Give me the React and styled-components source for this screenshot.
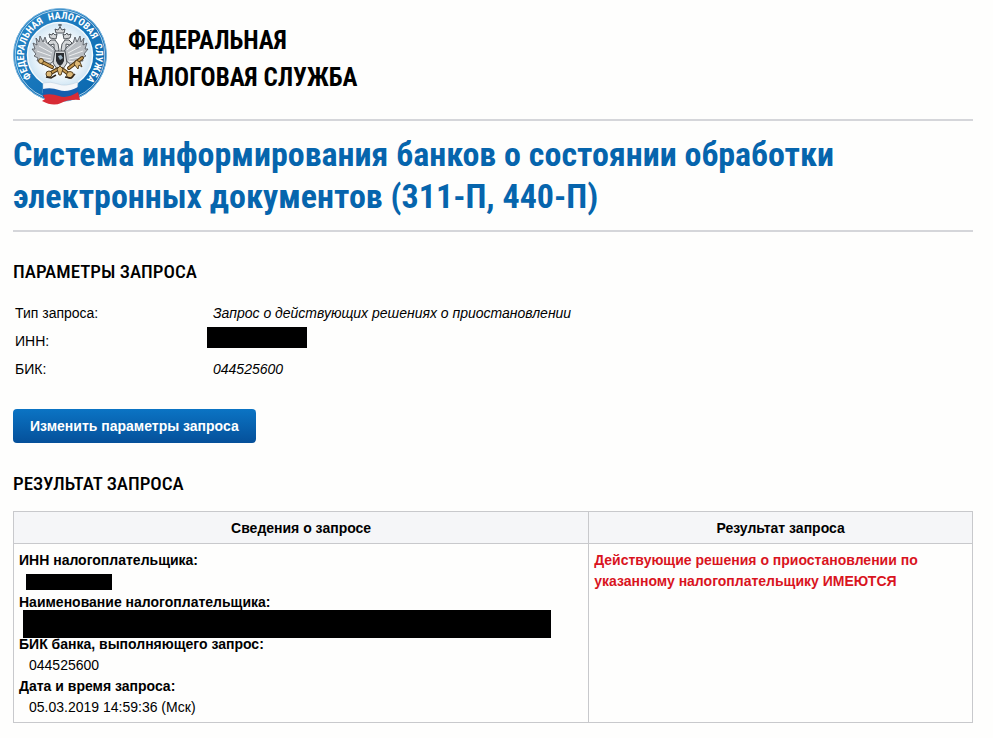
import React from "react";
import styled, { createGlobalStyle } from "styled-components";

const GlobalStyle = createGlobalStyle`
  body {
    margin: 0;
    background-color: #fefefd;
    color: #000;
    font-family: "Liberation Sans", Arial, sans-serif;
    font-size: 14px;
    line-height: 21px;
  }
`;

const Page = styled.div`
  padding: 7px 20px 16px 13px;
`;

const Header = styled.header`
  display: flex;
  align-items: flex-start;
  gap: 20px;
  height: 112px;
  border-bottom: 2px solid #d5d6da;
`;

const Brand = styled.div`
  padding-top: 15px;
  font-family: "Roboto Condensed", Roboto, sans-serif;
  font-size: 25px;
  font-weight: 700;
  line-height: 37px;
  text-transform: uppercase;
`;

const TitleBar = styled.div`
  padding: 12px 0 13px;
  border-bottom: 2px solid #d5d6da;
`;

const Title = styled.h1`
  margin: 0;
  color: #0665ad;
  font-family: "Roboto Condensed", Roboto, sans-serif;
  font-size: 34px;
  font-weight: 700;
  line-height: 42px;
`;

const Heading = styled.h2`
  margin: 0;
  padding: 25px 0 12px;
  font-family: "Roboto Condensed", Roboto, sans-serif;
  font-size: 19px;
  font-weight: 500;
  line-height: 30px;
  text-transform: uppercase;
`;

const Params = styled.dl`
  display: grid;
  grid-template-columns: 192px 1fr;
  grid-auto-rows: 28px;
  margin: 0 0 26px;
  padding-left: 2px;
  line-height: 28px;
`;

const ParamName = styled.dt``;

const ParamValue = styled.dd`
  margin: 0;
  padding-left: ${({ $hidden }) => ($hidden ? 0 : 6)}px;
  font-style: italic;
`;

const Redacted = styled.div`
  width: ${({ $width }) => $width}px;
  max-width: 100%;
  height: ${({ $height }) => $height}px;
  flex-shrink: 0;
  background-color: #000;
`;

const Button = styled.button`
  display: block;
  height: 34px;
  margin-bottom: 1px;
  padding: 0 17px;
  border: none;
  border-radius: 4px;
  background: linear-gradient(#0b74c4, #05509a);
  color: #fff;
  font-family: inherit;
  font-size: 14px;
  font-weight: 700;
  cursor: pointer;
`;

const ResultTable = styled.table`
  width: 100%;
  border-collapse: collapse;
  table-layout: fixed;
`;

const HeadCell = styled.th`
  width: ${({ $width }) => $width};
  height: 29px;
  padding: 2px 0 0;
  border: 1px solid #c8c9cc;
  background-color: #f5f6f8;
`;

const Cell = styled.td`
  padding: 6px 5px 4px;
  border: 1px solid #c8c9cc;
  vertical-align: top;
`;

const Details = styled.dl`
  margin: 0;
`;

const DetailName = styled.dt`
  font-weight: 700;
`;

const DetailValue = styled.dd`
  display: flex;
  align-items: center;
  height: 21px;
  margin: 0;
  padding-left: ${({ $indent = 10 }) => $indent}px;
`;

const Alert = styled.strong`
  color: #d9141e;
`;

const Logo = () => (
  <svg width="95" height="98" viewBox="0 0 95 98" aria-hidden="true">
    <defs>
      <linearGradient id="ring" x1="0" y1="0" x2="1" y2="1">
        <stop offset="0" stopColor="#2787c8" />
        <stop offset="1" stopColor="#0865ad" />
      </linearGradient>
      <radialGradient id="disc">
        <stop offset="0.5" stopColor="#ffffff" />
        <stop offset="1" stopColor="#cfe5f4" />
      </radialGradient>
      <path id="arc" d="M 19.4 71.1 A 36 36 0 1 1 74.6 71.1" />
    </defs>
    <circle cx="47" cy="48" r="46.5" fill="url(#ring)" stroke="#7db6de" />
    <circle cx="47" cy="48" r="44.8" fill="none" stroke="#e9f4fb" strokeWidth="0.7" />
    <circle cx="47" cy="48" r="32.5" fill="url(#disc)" stroke="#f4fafd" strokeWidth="1.5" />
    <g fill="#fff" fontFamily="Roboto Condensed, Roboto, sans-serif" fontSize="10" fontWeight="700">
      <text>
        <textPath href="#arc" startOffset="1">ФЕДЕРАЛЬНАЯ</textPath>
      </text>
      <text>
        <textPath href="#arc" startOffset="70">НАЛОГОВАЯ</textPath>
      </text>
      <text>
        <textPath href="#arc" startOffset="127">СЛУЖБА</textPath>
      </text>
    </g>
    {/* wings */}
    <g fill="#b9bdc2" stroke="#4c5157" strokeWidth="0.8" strokeLinejoin="round">
      <path d="M44 44 L39 39 L34 36 L32 30 L30 35 L27 29 L26 35 L23 31 L24 38 L20 36 L22 42 L19 42 L23 47 L21 49 L25 51 L24 54 L29 54 L29 58 L33 56 L35 60 L39 55 L44 53 Z" />
      <path d="M50 44 L55 39 L60 36 L62 30 L64 35 L67 29 L68 35 L71 31 L70 38 L74 36 L72 42 L75 42 L71 47 L73 49 L69 51 L70 54 L65 54 L65 58 L61 56 L59 60 L55 55 L50 53 Z" />
    </g>
    <g fill="none" stroke="#f3f4f5" strokeWidth="0.9">
      <path d="M40 43 L31 35 M39 46 L26 39 M38 49 L24 44 M38 52 L27 50 M39 54 L33 55" />
      <path d="M54 43 L63 35 M55 46 L68 39 M56 49 L70 44 M56 52 L67 50 M55 54 L61 55" />
    </g>
    {/* heads, crowns and body */}
    <g fill="#d5d7d9" stroke="#41464c" strokeWidth="0.9" strokeLinejoin="round">
      <path d="M44 47 L41 41 L41 37 L37 38 L35 36 L38 33 L42 33 L45 37 L46 43 Z" />
      <path d="M50 47 L53 41 L53 37 L57 38 L59 36 L56 33 L52 33 L49 37 L48 43 Z" />
      <path d="M37 31 L36 27 L39 28 L40 26 L42 28 L44 27 L43 32 Z" />
      <path d="M57 31 L58 27 L55 28 L54 26 L52 28 L50 27 L51 32 Z" />
      <path d="M43 26 L42 22 L45 23 L47 20 L49 23 L52 22 L51 26 Z" />
      <path d="M42 44 L52 44 L54 56 L50 62 L47 66 L44 62 L40 56 Z" />
    </g>
    <path d="M47 17 V21 M45 18 H49" stroke="#41464c" strokeWidth="1" />
    <path d="M43 46 H51 V54 Q50 57 47 59 Q44 57 43 54 Z" fill="#292c31" />
    <path d="M45 49 L48 48 L50 51 L47 53 Z" fill="#9fb5c5" />
    {/* golden sceptre, orb and keys */}
    <g fill="none" stroke="#4a3415" strokeWidth="4" strokeLinecap="round">
      <path d="M29 55 L39 60 M56 61 L69 51 M36 67 L45 62 M49 62 L57 68" />
    </g>
    <g fill="none" stroke="#c79a50" strokeWidth="2" strokeLinecap="round">
      <path d="M29 55 L39 60 M56 61 L69 51 M36 67 L45 62 M49 62 L57 68" />
    </g>
    <g fill="#ddb978" stroke="#4a3415" strokeWidth="0.9">
      <circle cx="28" cy="54" r="2.5" />
      <circle cx="36" cy="67" r="3" />
      <circle cx="57" cy="68" r="3.5" />
      <path d="M63 53 L67 55 L69 60 L66 58 L65 62 L61 57 Z" />
      <path d="M44 62 L47 59 L50 62 L48 68 H46 Z" />
    </g>
    <path d="M33 70 L38 71 L43 68 M52 70 L58 71 L62 67" stroke="#30251a" strokeWidth="1.5" fill="none" />
    {/* flag */}
    <path d="M30 76 Q38 74 45 77 T65 75 L64 84 Q57 84 49 87 T30 86 Z" fill="#f5f7fa" stroke="#b6c8d8" strokeWidth="0.5" />
    <path d="M30 82 Q38 80 46 83 T65 80 L66 89 Q56 89 48 92 T30 90 Z" fill="#165eae" />
    <path d="M30 88 Q38 86 46 89 T65 85 L67 93 Q56 92 48 96 T29 94 L32 92 Z" fill="#d82b35" />
  </svg>
);

const App = () => {
  return (
    <>
      <GlobalStyle />
      <Page>
        <Header>
          <Logo />
          <Brand>
            Федеральная
            <br />
            налоговая служба
          </Brand>
        </Header>
        <main>
          <TitleBar>
            <Title>
              Система информирования банков о состоянии обработки
              <br />
              электронных документов (311-П, 440-П)
            </Title>
          </TitleBar>

          <Heading>Параметры запроса</Heading>
          <Params>
            <ParamName>Тип запроса:</ParamName>
            <ParamValue>Запрос о действующих решениях о приостановлении</ParamValue>
            <ParamName>ИНН:</ParamName>
            <ParamValue $hidden>
              <Redacted $width={100} $height={21} />
            </ParamValue>
            <ParamName>БИК:</ParamName>
            <ParamValue>044525600</ParamValue>
          </Params>
          <Button type="button">Изменить параметры запроса</Button>

          <Heading>Результат запроса</Heading>
          <ResultTable>
            <thead>
              <tr>
                <HeadCell $width="60%">Сведения о запросе</HeadCell>
                <HeadCell $width="40%">Результат запроса</HeadCell>
              </tr>
            </thead>
            <tbody>
              <tr>
                <Cell>
                  <Details>
                    <DetailName>ИНН налогоплательщика:</DetailName>
                    <DetailValue $indent={7}>
                      <Redacted $width={86} $height={16} />
                    </DetailValue>
                    <DetailName>Наименование налогоплательщика:</DetailName>
                    <DetailValue $indent={4}>
                      <Redacted $width={528} $height={28} />
                    </DetailValue>
                    <DetailName>БИК банка, выполняющего запрос:</DetailName>
                    <DetailValue>044525600</DetailValue>
                    <DetailName>Дата и время запроса:</DetailName>
                    <DetailValue>05.03.2019 14:59:36 (Мск)</DetailValue>
                  </Details>
                </Cell>
                <Cell>
                  <Alert>
                    Действующие решения о приостановлении по указанному
                    налогоплательщику ИМЕЮТСЯ
                  </Alert>
                </Cell>
              </tr>
            </tbody>
          </ResultTable>
        </main>
      </Page>
    </>
  );
};

export default App;
